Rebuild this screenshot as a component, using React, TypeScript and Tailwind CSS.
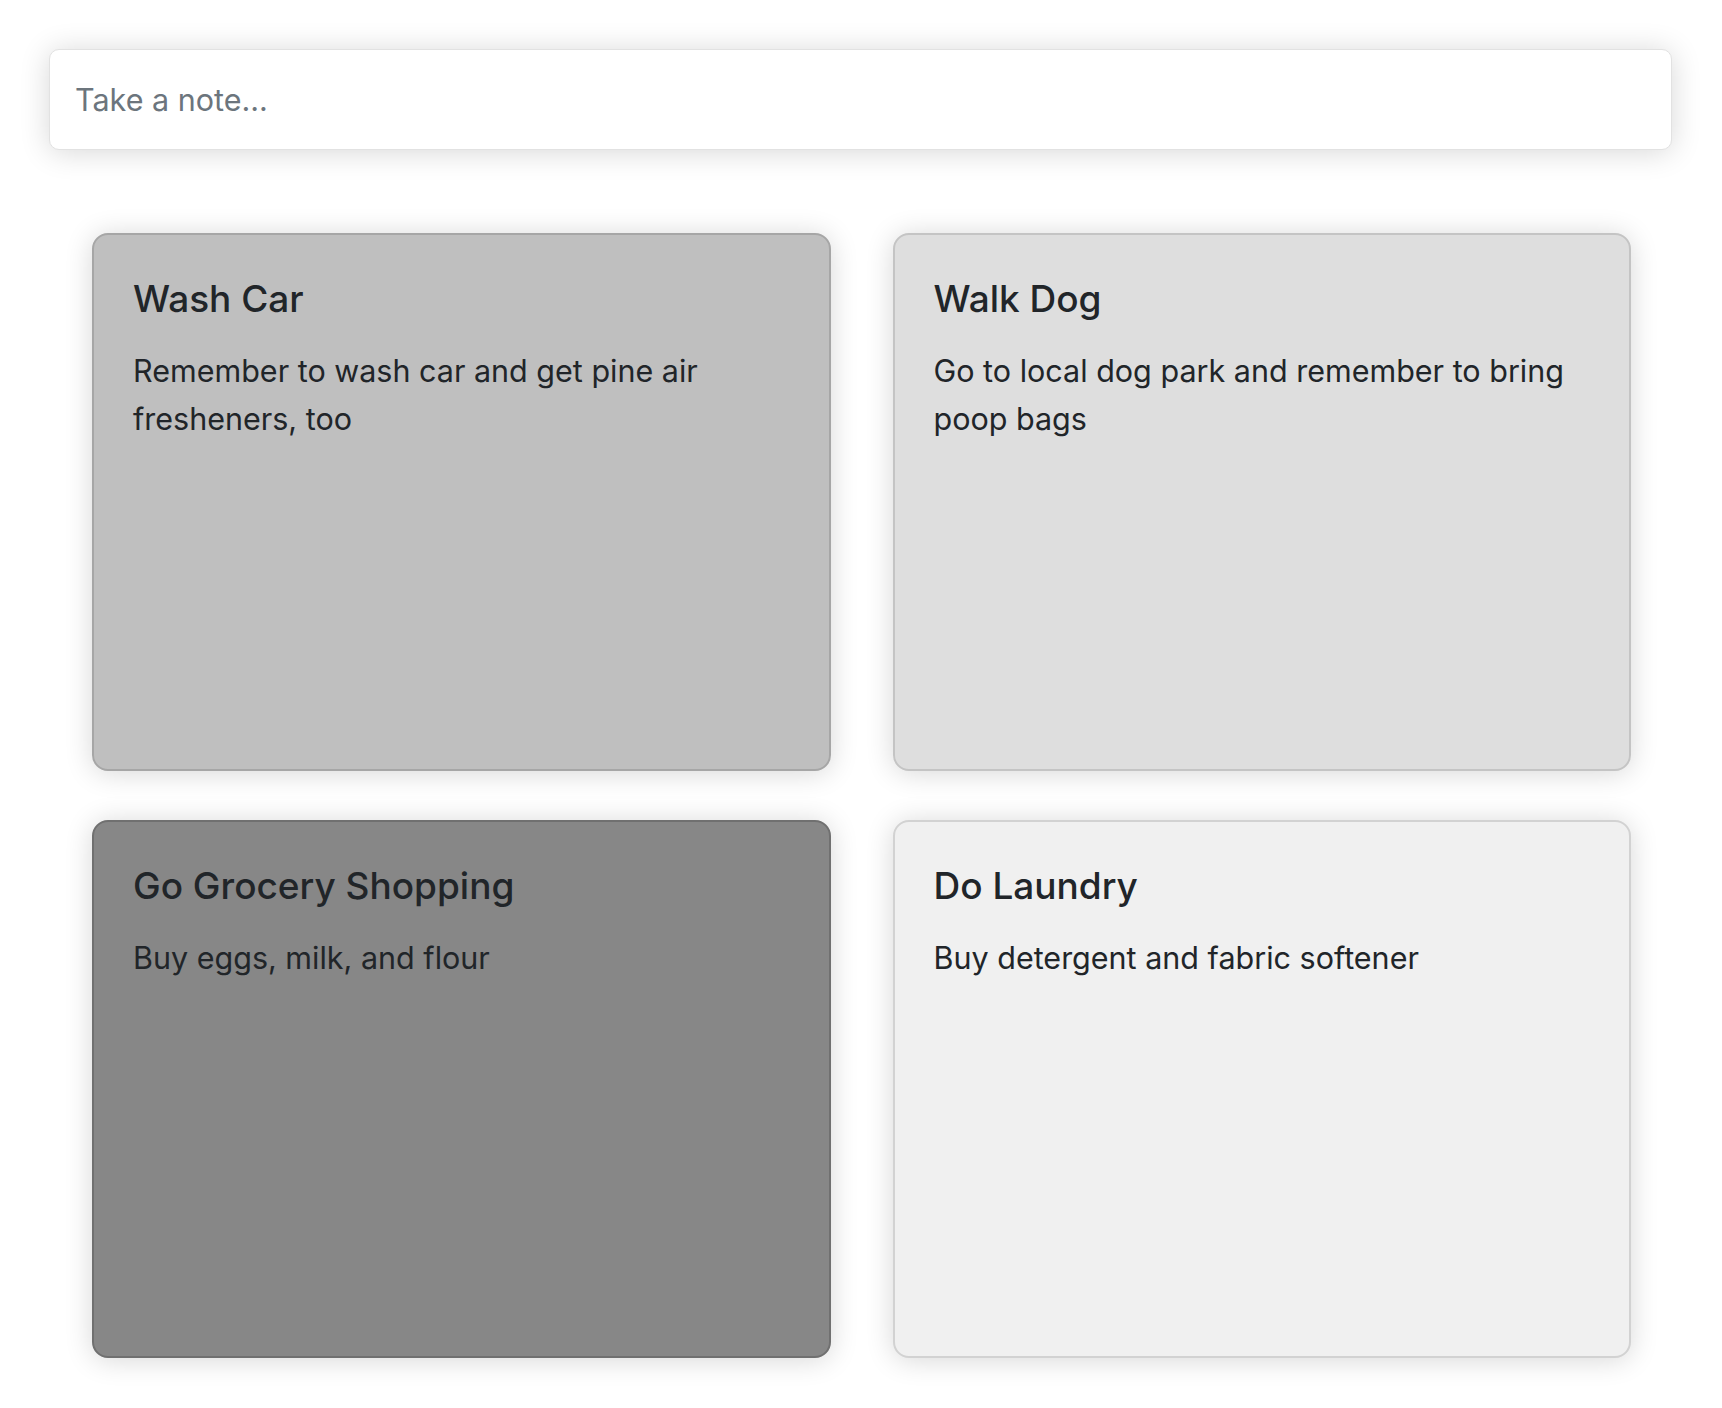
import React from "react";

const notes = [
  { title: "Wash Car", body: "Remember to wash car and get pine air fresheners, too", cls: "bg-[#bfbfbf] border-[#a6a6a6]" },
  { title: "Walk Dog", body: "Go to local dog park and remember to bring poop bags", cls: "bg-[#dedede] border-[#c4c4c4]" },
  { title: "Go Grocery Shopping", body: "Buy eggs, milk, and flour", cls: "bg-[#878787] border-[#707070]" },
  { title: "Do Laundry", body: "Buy detergent and fabric softener", cls: "bg-[#f0f0f0] border-[#d2d2d2]" },
];

export default function App() {
  return (
    <div className="min-h-[1408px] w-full bg-white text-[#212529]" style={{ fontFamily: "Inter, 'Noto Sans', sans-serif" }}>
      <div className="pl-[49px] pr-[50px] pt-[49px]">
        <div className="h-[101px] rounded-[10px] border border-[#e2e2e2] bg-white shadow-[0_2px_30px_rgba(0,0,0,0.16)] flex items-center pl-[25px] pr-[25px]">
          <input
            className="w-full bg-transparent text-[30.5px] outline-none placeholder:text-[#6c757d]"
            placeholder="Take a note..."
          />
        </div>
      </div>
      <div className="grid grid-cols-2 gap-x-[62px] gap-y-[49px] pl-[92px] pr-[91px] pt-[83px] pb-[49px]">
        {notes.map((n) => (
          <div
            key={n.title}
            className={`h-[538px] rounded-[16px] border-2 ${n.cls} shadow-[0_2px_28px_rgba(0,0,0,0.16)] pl-[39px] pr-[38px] pt-[42px]`}
          >
            <h2 className="text-[37px] font-medium leading-[1.2]">{n.title}</h2>
            <p className="mt-[26px] text-[30.5px] leading-[48px]">{n.body}</p>
          </div>
        ))}
      </div>
    </div>
  );
}
